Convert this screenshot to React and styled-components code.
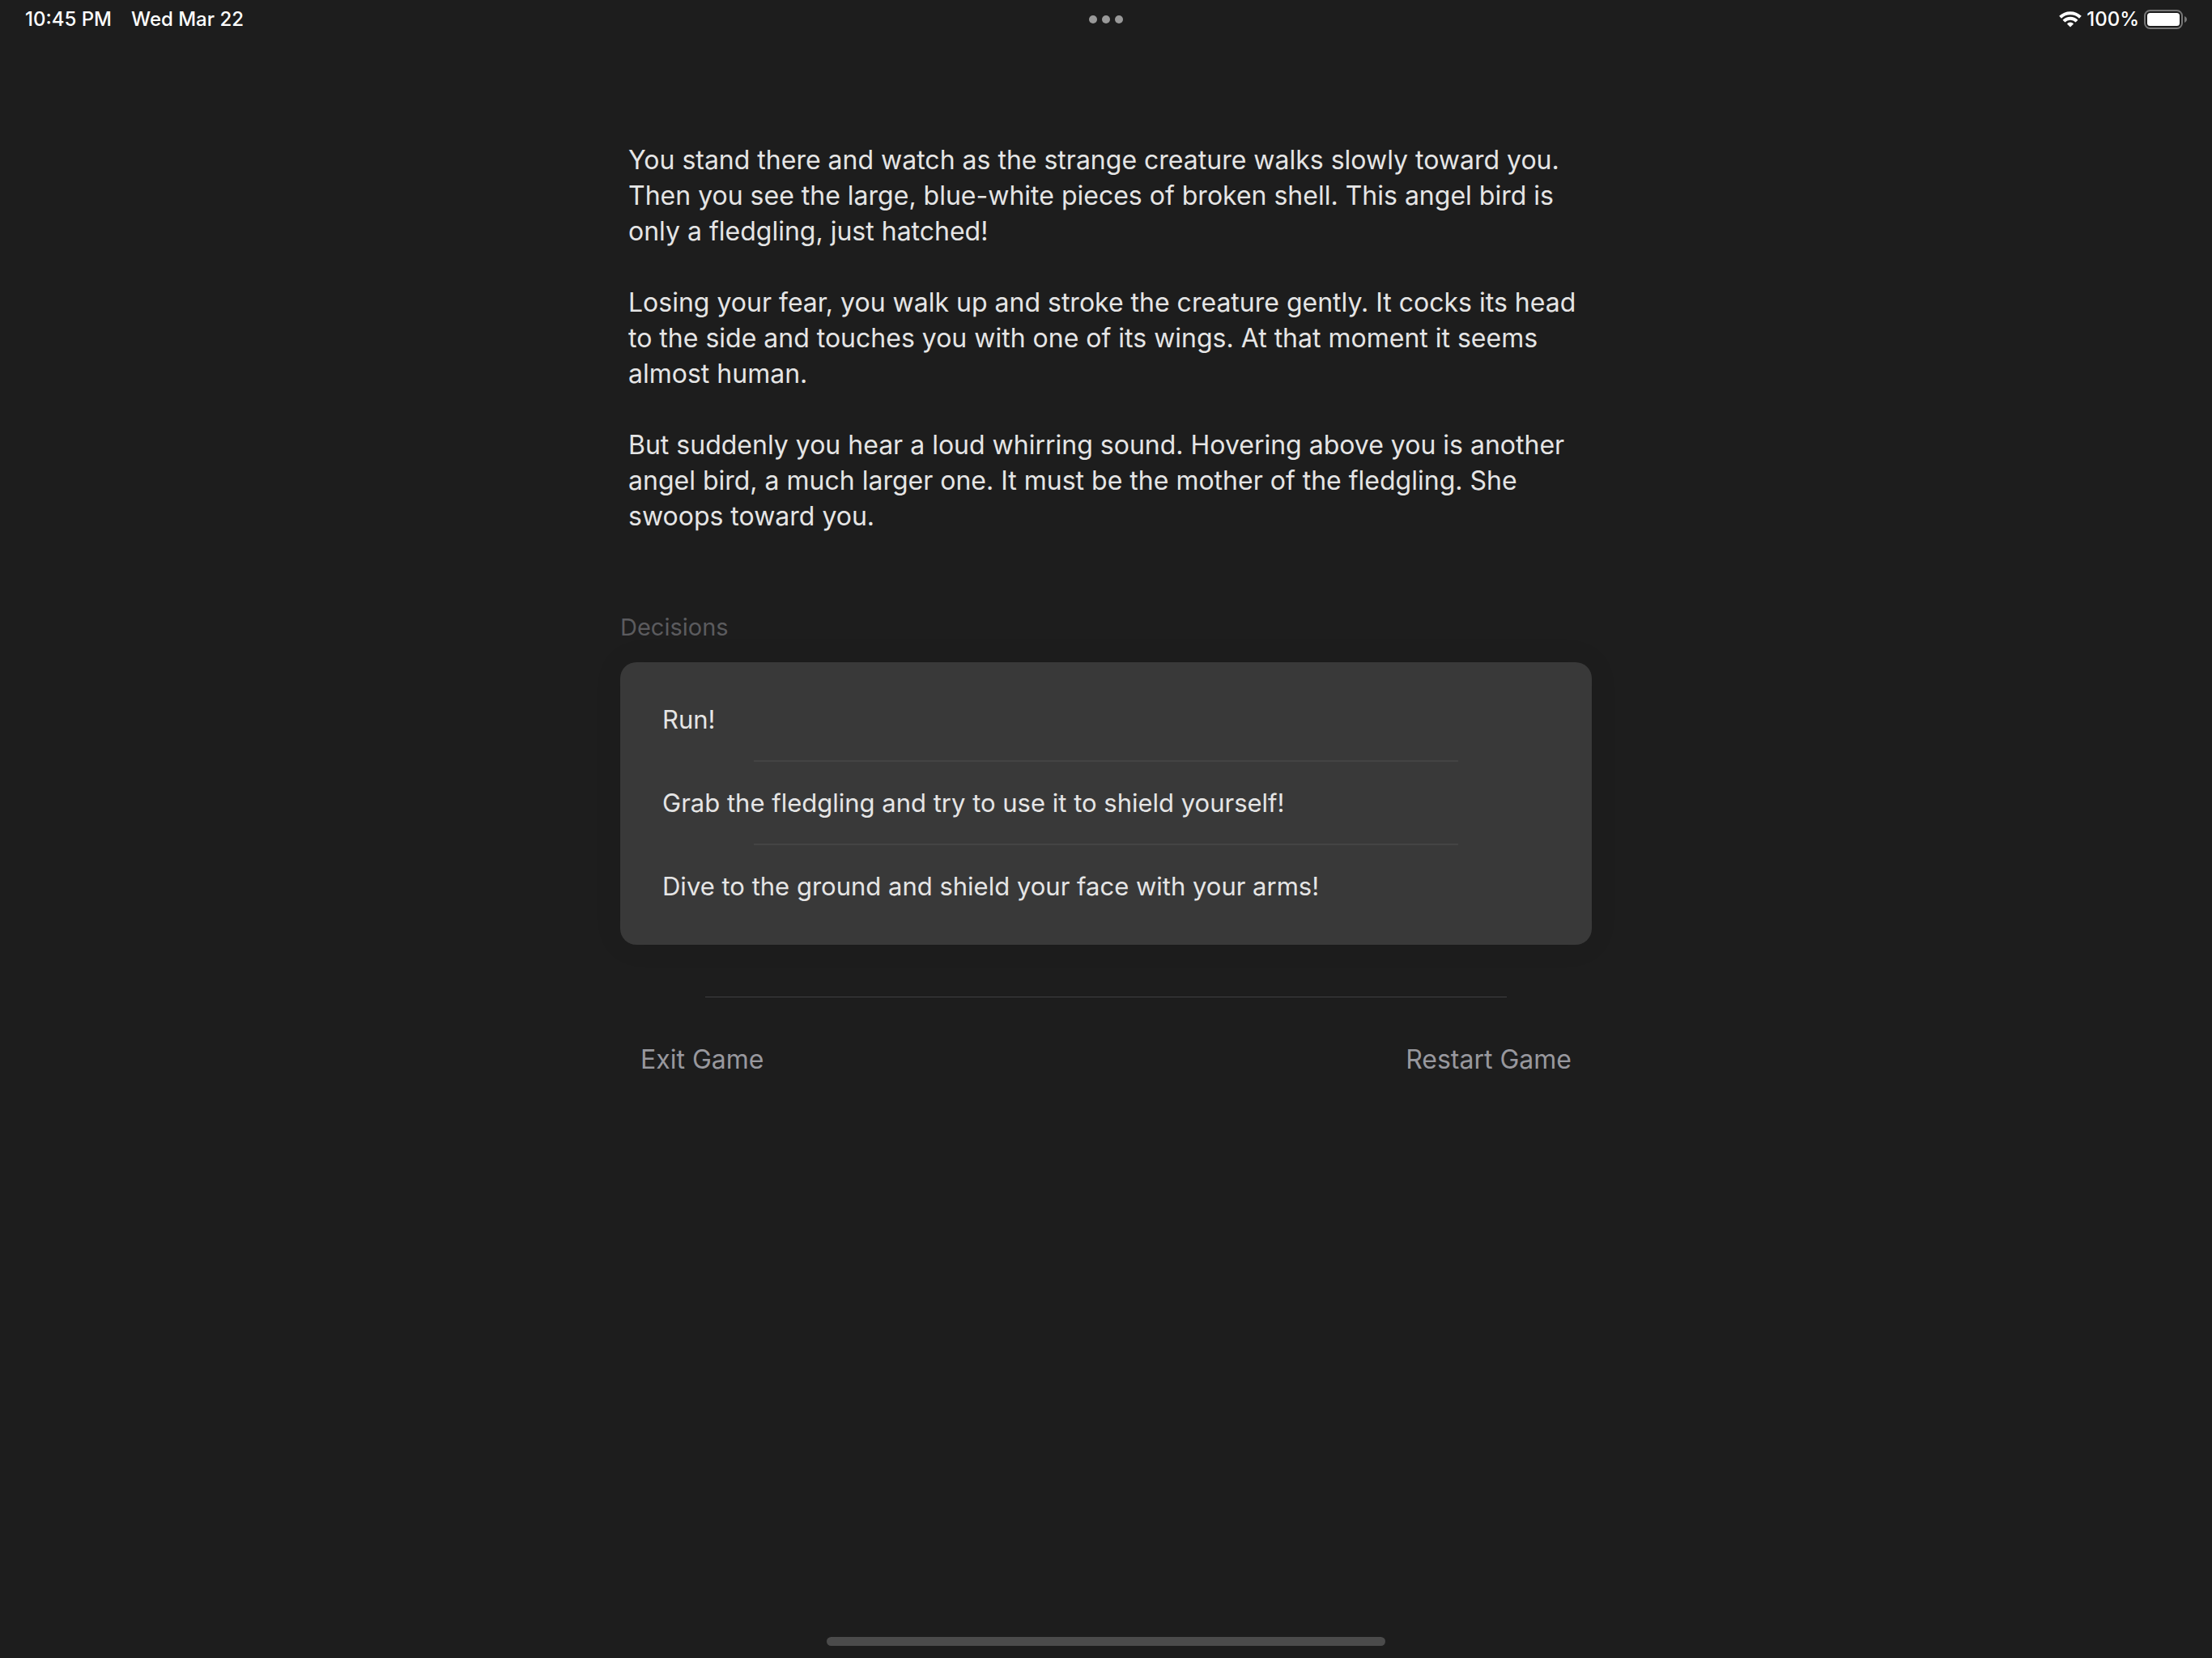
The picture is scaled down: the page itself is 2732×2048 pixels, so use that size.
import React from "react";
import styled, { createGlobalStyle } from "styled-components";

const GlobalStyle = createGlobalStyle`
  *, *::before, *::after {
    box-sizing: border-box;
  }
  body {
    margin: 0;
    background: #1d1d1d;
    color: #e5e5e5;
    font-family: Inter, "Liberation Sans", sans-serif;
  }
`;

const Screen = styled.div`
  display: flex;
  flex-direction: column;
  min-height: 100vh;
`;

const StatusBar = styled.header`
  display: grid;
  grid-template-columns: 1fr auto 1fr;
  align-items: center;
  height: 48px;
  padding: 0 31px;
  color: #ffffff;
  font-size: 24px;
  font-weight: 500;
  line-height: 30px;
`;

const StatusGroup = styled.div`
  display: flex;
  align-items: center;
  justify-content: ${({ $end }) => ($end ? "flex-end" : "flex-start")};
  gap: ${({ $gap }) => $gap}px;
  white-space: nowrap;
`;

const MultitaskButton = styled.button`
  display: flex;
  gap: 6px;
  padding: 0;
  border: 0;
  background: none;
`;

const Dot = styled.span`
  width: 10px;
  height: 10px;
  border-radius: 50%;
  background: #999999;
`;

const Main = styled.main`
  width: 100%;
  max-width: 1200px;
  margin: 0 auto;
  padding-top: 128px;
`;

const Story = styled.article`
  display: flex;
  flex-direction: column;
  gap: 44px;
  padding: 0 10px;
`;

const Paragraph = styled.p`
  margin: 0;
  font-size: 32px;
  line-height: 44px;
`;

const SectionTitle = styled.h2`
  margin: 97px 0 25px;
  color: #5b5b5e;
  font-size: 29px;
  font-weight: 400;
  line-height: 36px;
`;

const Card = styled.ul`
  margin: 0;
  padding: 20px 52px 22px;
  border-radius: 20px;
  background: #393939;
  box-shadow: 0 0 36px rgba(0, 0, 0, 0.08);
  list-style: none;
`;

const ChoiceItem = styled.li`
  & + &::before {
    content: "";
    display: block;
    height: 2px;
    margin: 0 113px;
    background: #444444;
  }
`;

const ChoiceButton = styled.button`
  display: block;
  width: 100%;
  height: 101px;
  padding: 0;
  border: 0;
  background: none;
  color: inherit;
  font: inherit;
  font-size: 31px;
  text-align: left;
`;

const Divider = styled.hr`
  height: 1px;
  margin: 64px 105px 55px;
  border: 0;
  background: #3f3f41;
`;

const Actions = styled.footer`
  display: flex;
  justify-content: space-between;
  padding: 0 25px;
`;

const ActionButton = styled.button`
  padding: 0;
  border: 0;
  background: none;
  color: #98989e;
  font: inherit;
  font-size: 32px;
  line-height: 44px;
`;

const HomeIndicator = styled.div`
  width: 690px;
  max-width: 60%;
  height: 11px;
  margin: auto auto 15px;
  border-radius: 6px;
  background: #4b4b4b;
`;

const WifiIcon = () => (
  <svg width="28" height="20" viewBox="0 0 28 20" aria-label="Wi-Fi">
    <g fill="none" stroke="#fff" strokeWidth="4">
      <path d="M1.6 7.3a17.8 17.8 0 0 1 24.8 0" />
      <path d="M6 12.2a11.1 11.1 0 0 1 16 0" />
    </g>
    <path d="M14 19.6l-4.1-4.2a5.4 5.4 0 0 1 8.2 0z" fill="#fff" />
  </svg>
);

const BatteryIcon = () => (
  <svg width="53" height="24" viewBox="0 0 53 24" aria-label="Battery full">
    <rect x="1" y="1" width="46" height="22" rx="6.5" fill="none" stroke="#777" strokeWidth="2" />
    <rect x="4" y="4" width="40" height="16" rx="3.5" fill="#fff" />
    <path d="M50 8c1.8.8 3 2.2 3 4s-1.2 3.2-3 4z" fill="#777" />
  </svg>
);

const story = [
  "You stand there and watch as the strange creature walks slowly toward you. Then you see the large, blue-white pieces of broken shell. This angel bird is only a fledgling, just hatched!",
  "Losing your fear, you walk up and stroke the creature gently. It cocks its head to the side and touches you with one of its wings. At that moment it seems almost human.",
  "But suddenly you hear a loud whirring sound. Hovering above you is another angel bird, a much larger one. It must be the mother of the fledgling. She swoops toward you.",
];

const choices = [
  "Run!",
  "Grab the fledgling and try to use it to shield yourself!",
  "Dive to the ground and shield your face with your arms!",
];

export default function App() {
  return (
    <Screen>
      <GlobalStyle />
      <StatusBar>
        <StatusGroup $gap={24}>
          <span>10:45 PM</span>
          <span>Wed Mar 22</span>
        </StatusGroup>
        <MultitaskButton type="button" aria-label="Multitasking">
          <Dot />
          <Dot />
          <Dot />
        </MultitaskButton>
        <StatusGroup $end $gap={6}>
          <WifiIcon />
          <span>100%</span>
          <BatteryIcon />
        </StatusGroup>
      </StatusBar>
      <Main>
        <Story>
          {story.map((text) => (
            <Paragraph key={text}>{text}</Paragraph>
          ))}
        </Story>
        <SectionTitle>Decisions</SectionTitle>
        <Card>
          {choices.map((choice) => (
            <ChoiceItem key={choice}>
              <ChoiceButton type="button">{choice}</ChoiceButton>
            </ChoiceItem>
          ))}
        </Card>
        <Divider />
        <Actions>
          <ActionButton type="button">Exit Game</ActionButton>
          <ActionButton type="button">Restart Game</ActionButton>
        </Actions>
      </Main>
      <HomeIndicator />
    </Screen>
  );
}
